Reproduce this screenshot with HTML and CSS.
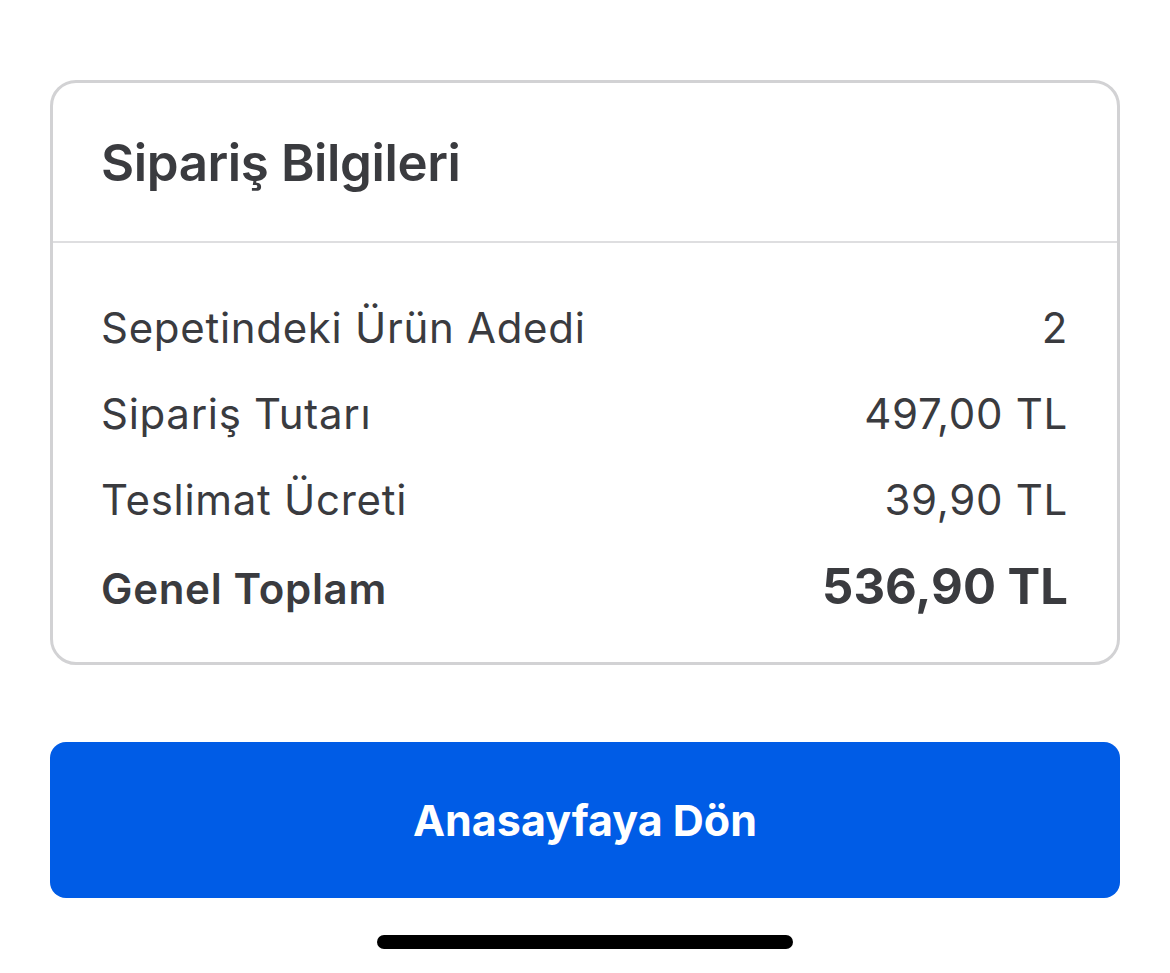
FILE: index.html
```html
<!DOCTYPE html>
<html lang="tr">
<head>
    <meta charset="UTF-8">
    <meta name="viewport" content="width=device-width, initial-scale=1.0">
    <title>Sipariş Bilgileri</title>
    <link rel="stylesheet" href="styles.css">
</head>
<body>
    <div class="page">
        <div class="card">
            <div class="card-header">
                <h2>Sipariş Bilgileri</h2>
            </div>
            <div class="card-body">
                <div class="row">
                    <span>Sepetindeki Ürün Adedi</span>
                    <span>2</span>
                </div>
                <div class="row">
                    <span>Sipariş Tutarı</span>
                    <span>497,00 TL</span>
                </div>
                <div class="row">
                    <span>Teslimat Ücreti</span>
                    <span>39,90 TL</span>
                </div>
                <div class="row total">
                    <span>Genel Toplam</span>
                    <span class="amount">536,90 TL</span>
                </div>
            </div>
        </div>

        <button class="home-btn" type="button">Anasayfaya Dön</button>

        <div class="home-indicator"></div>
    </div>
</body>
</html>
```

FILE: styles.css
```css
body {
    margin: 0;
    background: #fff;
    font-family: Inter, "Noto Sans", sans-serif;
    color: #3a3b3f;
}
.page {
    padding: 80px 50px 0 50px;
    display: flex;
    flex-direction: column;
}
.card {
    border: 3px solid #d2d2d4;
    border-radius: 26px;
}
.card-header {
    height: 158px;
    padding: 0 48px;
    border-bottom: 2px solid #dedee0;
    display: flex;
    align-items: center;
}
.card-header h2 {
    margin: 0;
    font-size: 51px;
    font-weight: 600;
    letter-spacing: -0.4px;
}
.card-body {
    padding: 42px 49px 29px 48px;
}
.row {
    display: flex;
    justify-content: space-between;
    align-items: baseline;
    font-size: 42px;
    line-height: 86px;
    letter-spacing: 0.7px;
}
.row.total {
    font-weight: 600;
    line-height: 88px;
}
.row .amount {
    font-size: 49px;
    font-weight: 700;
    letter-spacing: 0;
}
.home-btn {
    margin-top: 77px;
    height: 156px;
    border: none;
    border-radius: 16px;
    background: #005ce6;
    color: #fff;
    font-family: Inter, "Noto Sans", sans-serif;
    font-size: 43px;
    font-weight: 700;
}
.home-indicator {
    align-self: center;
    margin-top: 37px;
    width: 416px;
    height: 14px;
    border-radius: 7px;
    background: #000;
}
```
